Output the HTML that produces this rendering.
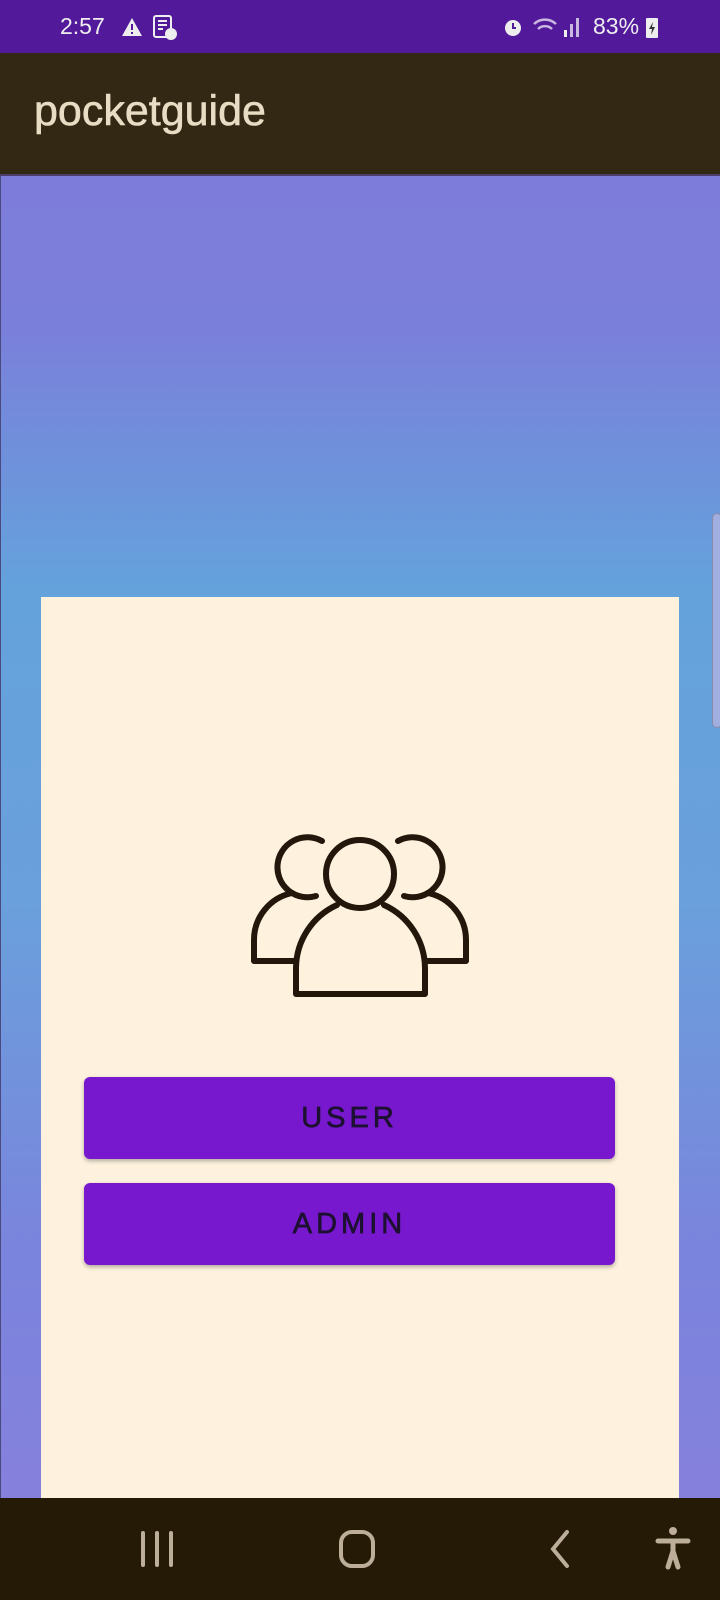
<!DOCTYPE html>
<html><head><meta charset="utf-8"><style>
*{margin:0;padding:0;box-sizing:border-box}
body{width:720px;height:1600px;position:relative;overflow:hidden;font-family:"Liberation Sans",sans-serif;
background:linear-gradient(180deg,#8377d9 0px,#7a80da 330px,#64a2dc 590px,#6aa0dc 900px,#7a84dc 1250px,#8580dc 1500px)}
.sb{position:absolute;top:0;left:0;width:720px;height:53px;background:#52199b;color:#eee;font-size:23px}
.ab{position:absolute;top:53px;left:0;width:720px;height:123px;background:#332813;border-bottom:2px solid #4d3d6a}
.ab span{position:absolute;left:34px;top:34px;font-size:43px;color:#e8dcc4;-webkit-text-stroke:0.6px #e8dcc4}
.card{position:absolute;left:41px;top:597px;width:638px;height:901px;background:#fef2de}
.btn{position:absolute;left:43px;width:531px;height:82px;background:#7718cf;border-radius:6px;box-shadow:0 2px 4px rgba(0,0,0,.3);
color:#1d1030;font-size:29px;letter-spacing:4px;text-align:center;line-height:82px;-webkit-text-stroke:0.7px #1d1030}
.nav{position:absolute;top:1498px;left:0;width:720px;height:102px;background:#251a06}
</style></head><body>
<div style="position:absolute;left:0;top:176px;width:1px;height:1322px;background:#4a4a80"></div>
<div style="position:absolute;left:712px;top:513px;width:10px;height:215px;border-radius:5px;background:#a0aee0;border:1px solid #8a8aa8"></div>
<div class="sb"><span style="position:absolute;left:60px;top:13px">2:57</span>
<svg style="position:absolute;left:121px;top:17px" width="22" height="20"><path d="M11 1L21 19H1Z" fill="#eee"/><rect x="10" y="7" width="2" height="6" fill="#52199b"/><rect x="10" y="15" width="2" height="2" fill="#52199b"/></svg>
<svg style="position:absolute;left:152px;top:14px" width="26" height="26"><rect x="2" y="2" width="17" height="21" rx="2" fill="none" stroke="#eee" stroke-width="2"/><path d="M6 7h9M6 11h9M6 15h5" stroke="#eee" stroke-width="2"/><circle cx="19" cy="20" r="6" fill="#eee"/></svg>
<svg style="position:absolute;left:502px;top:16px" width="22" height="22"><circle cx="11" cy="12" r="8" fill="#eee"/><path d="M11 7v5h3" stroke="#52199b" stroke-width="2" fill="none"/></svg>
<svg style="position:absolute;left:532px;top:14px" width="48" height="26"><path d="M2 10a16 16 0 0 1 22 0M6 15a10 10 0 0 1 14 0" stroke="#c8b8e0" stroke-width="2.5" fill="none"/><rect x="32" y="16" width="3" height="7" fill="#eee"/><rect x="38" y="10" width="3" height="13" fill="#c8b8e0"/><rect x="44" y="4" width="3" height="19" fill="#c8b8e0"/></svg>
<span style="position:absolute;left:593px;top:13px">83%</span>
<svg style="position:absolute;left:645px;top:15px" width="14" height="24"><rect x="1" y="3" width="12" height="20" rx="1" fill="#eee"/><path d="M8 7l-4 7h3l-1 6 4-8H7z" fill="#333"/></svg>
</div>
<div class="ab"><span>pocketguide</span></div>
<div class="card">
<svg style="position:absolute;left:199px;top:224px" width="240" height="190" viewBox="240 820 240 190">
<g fill="none" stroke="#22170a" stroke-width="6" stroke-linecap="round" stroke-linejoin="round">
<path d="M322 840a30 30 0 1 0 -6 55"/>
<path d="M398 840a30 30 0 1 1 6 55"/>
<circle cx="360" cy="873" r="34"/>
<path d="M292 892a48 48 0 0 0 -38 47v21h40"/>
<path d="M428 892a48 48 0 0 1 38 47v21h-40"/>
<path d="M337 904a70 70 0 0 0 -41 63v26h129v-26a70 70 0 0 0 -41 -63"/>
</g></svg>
<div class="btn" style="top:480px">USER</div>
<div class="btn" style="top:586px">ADMIN</div>
</div>
<div class="nav">
<svg style="position:absolute;left:138px;top:32px" width="40" height="38"><path d="M5 3v32M19 3v32M33 3v32" stroke="#bcae98" stroke-width="4" stroke-linecap="round"/></svg>
<svg style="position:absolute;left:338px;top:31px" width="40" height="40"><rect x="3" y="3" width="32" height="34" rx="11" fill="none" stroke="#bcae98" stroke-width="4"/></svg>
<svg style="position:absolute;left:548px;top:31px" width="24" height="40"><path d="M19 3L5 20l14 17" fill="none" stroke="#bcae98" stroke-width="4" stroke-linecap="round"/></svg>
<svg style="position:absolute;left:655px;top:28px" width="36" height="44"><circle cx="18" cy="5" r="4" fill="#bcae98"/><path d="M3 15h30M18 15v10M18 25l-5 16M18 25l5 16" stroke="#bcae98" stroke-width="5" stroke-linecap="round"/></svg>
</div>
</body></html>
